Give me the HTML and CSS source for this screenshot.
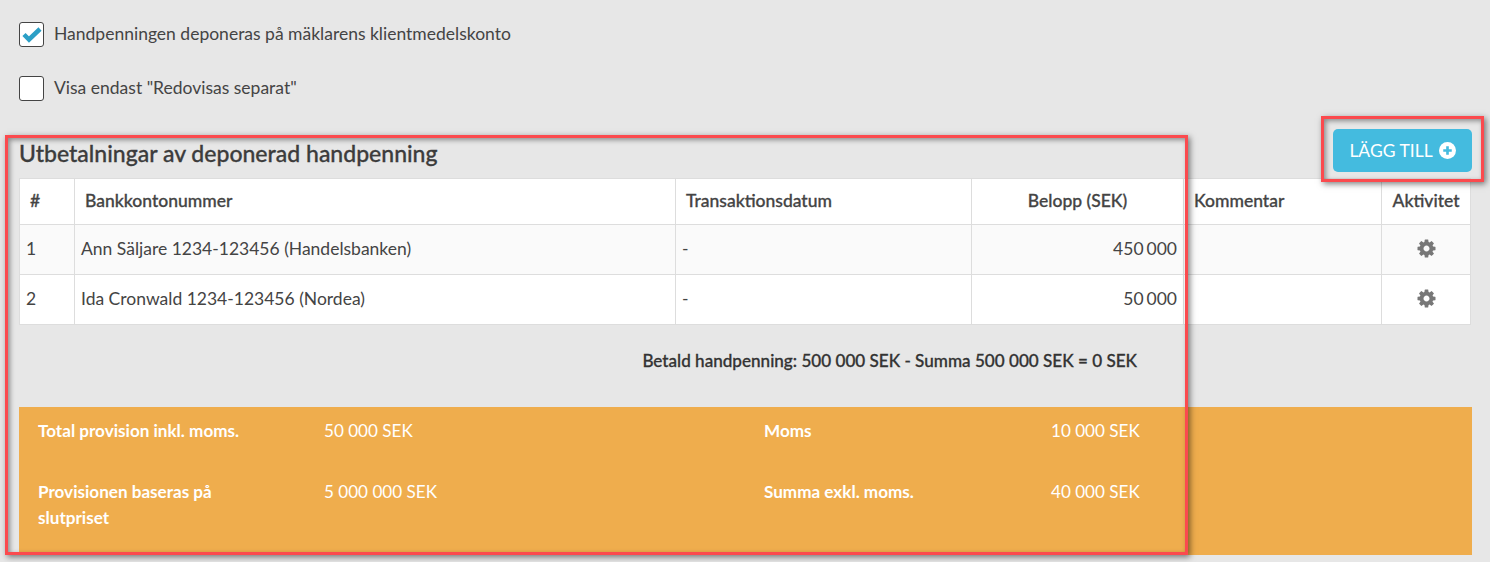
FILE: index.html
```html
<!DOCTYPE html>
<html lang="en">
<head>
    <meta charset="UTF-8">
    <title>Utbetalningar av deponerad handpenning</title>
    <link rel="stylesheet" href="styles.css">
</head>
<body>
    <div class="page">
        <label class="check-row">
            <span class="check-box">
                <svg viewBox="0 0 25 25" width="25" height="25"><path class="check-mark" d="M5 12.500 L10 17.500 L21 7"/></svg>
            </span>
            <span class="check-text">Handpenningen deponeras på mäklarens klientmedelskonto</span>
        </label>
        <label class="check-row">
            <span class="check-box"></span>
            <span class="check-text">Visa endast "Redovisas separat"</span>
        </label>

        <div class="section-head">
            <h2>Utbetalningar av deponerad handpenning</h2>
            <button class="add-btn"><span class="btn-text">LÄGG TILL</span>
                <svg viewBox="0 0 18 18" width="17" height="17"><circle cx="9" cy="9" r="9" fill="#fff"/><path class="plus" d="M9 4.500v9M4.500 9h9"/></svg>
            </button>
        </div>

        <table class="payments">
            <colgroup>
                <col class="col-nr"><col class="col-bank"><col class="col-date"><col class="col-sum"><col class="col-note"><col class="col-act">
            </colgroup>
            <thead>
                <tr>
                    <th>#</th>
                    <th>Bankkontonummer</th>
                    <th>Transaktionsdatum</th>
                    <th class="center">Belopp (SEK)</th>
                    <th>Kommentar</th>
                    <th class="center">Aktivitet</th>
                </tr>
            </thead>
            <tbody>
                <tr>
                    <td>1</td>
                    <td>Ann Säljare 1234-123456 (Handelsbanken)</td>
                    <td>-</td>
                    <td class="right">450 000</td>
                    <td></td>
                    <td class="center"><svg class="gear" viewBox="0 0 1792 1792" width="21" height="21"><path d="M1152 896q0-106-75-181t-181-75-181 75-75 181 75 181 181 75 181-75 75-181zm512-109v222q0 12-8 23t-20 13l-185 28q-19 54-39 91 35 50 107 138 10 12 10 25t-9 23q-27 37-99 108t-94 71q-12 0-26-9l-138-108q-44 23-91 38-16 136-29 186-7 28-36 28h-222q-14 0-24.500-8.500t-11.500-21.500l-28-184q-49-16-90-37l-141 107q-10 9-25 9-14 0-25-11-126-114-165-168-7-10-7-23 0-12 8-23 15-21 51-66.500t54-70.500q-27-50-41-99l-183-27q-13-2-21-12.500t-8-23.500v-222q0-12 8-23t19-13l186-28q14-46 39-92-40-57-107-138-10-12-10-24 0-10 9-23 26-36 98.500-107.500t94.500-71.500q13 0 26 10l138 107q44-23 91-38 16-136 29-186 7-28 36-28h222q14 0 24.500 8.500t11.500 21.500l28 184q49 16 90 37l142-107q9-9 24-9 13 0 25 10 129 119 165 170 7 8 7 22 0 12-8 23-15 21-51 66.500t-54 70.500q26 50 41 98l183 28q13 2 21 12.500t8 23.500z"/></svg></td>
                </tr>
                <tr>
                    <td>2</td>
                    <td>Ida Cronwald 1234-123456 (Nordea)</td>
                    <td>-</td>
                    <td class="right">50 000</td>
                    <td></td>
                    <td class="center"><svg class="gear" viewBox="0 0 1792 1792" width="21" height="21"><path d="M1152 896q0-106-75-181t-181-75-181 75-75 181 75 181 181 75 181-75 75-181zm512-109v222q0 12-8 23t-20 13l-185 28q-19 54-39 91 35 50 107 138 10 12 10 25t-9 23q-27 37-99 108t-94 71q-12 0-26-9l-138-108q-44 23-91 38-16 136-29 186-7 28-36 28h-222q-14 0-24.500-8.500t-11.500-21.500l-28-184q-49-16-90-37l-141 107q-10 9-25 9-14 0-25-11-126-114-165-168-7-10-7-23 0-12 8-23 15-21 51-66.500t54-70.500q-27-50-41-99l-183-27q-13-2-21-12.500t-8-23.500v-222q0-12 8-23t19-13l186-28q14-46 39-92-40-57-107-138-10-12-10-24 0-10 9-23 26-36 98.500-107.500t94.500-71.500q13 0 26 10l138 107q44-23 91-38 16-136 29-186 7-28 36-28h222q14 0 24.500 8.500t11.500 21.500l28 184q49 16 90 37l142-107q9-9 24-9 13 0 25 10 129 119 165 170 7 8 7 22 0 12-8 23-15 21-51 66.500t-54 70.500q26 50 41 98l183 28q13 2 21 12.500t8 23.500z"/></svg></td>
                </tr>
            </tbody>
        </table>

        <p class="balance">Betald handpenning: 500 000 SEK - Summa 500 000 SEK = 0 SEK</p>

        <div class="summary">
            <strong>Total provision inkl. moms.</strong>
            <span>50 000 SEK</span>
            <strong>Moms</strong>
            <span>10 000 SEK</span>
            <strong>Provisionen baseras på slutpriset</strong>
            <span>5 000 000 SEK</span>
            <strong>Summa exkl. moms.</strong>
            <span>40 000 SEK</span>
        </div>
    </div>

    <!-- annotation frames drawn over the screenshot -->
    <div class="mark mark-table"></div>
    <div class="mark mark-btn"></div>
</body>
</html>
```

FILE: styles.css
```css
html, body {
    height: 562px;
    overflow: hidden;
}
body {
    font-family: 'Lato', sans-serif;
    font-size: 17.5px;
    color: #444;
    background-color: #e7e7e7;
    margin: 0;
    position: relative;
}
.page {
    padding: 22px 18px 0 19px;
}
.check-row {
    display: flex;
    align-items: center;
    gap: 10px;
    height: 25px;
    margin-bottom: 29px;
}
.check-text {
    padding-bottom: 3px;
}
.check-box {
    width: 25px;
    height: 25px;
    box-sizing: border-box;
    background-color: #fff;
    border: 1px solid #444;
    border-radius: 3px;
    display: block;
}
.check-box svg {
    display: block;
    margin: -1px;
}
.check-mark {
    fill: none;
    stroke: #2b9fc6;
    stroke-width: 4.500;
}
.section-head {
    display: flex;
    justify-content: space-between;
    align-items: flex-end;
    height: 43px;
    margin-top: -1px;
    margin-bottom: 6px;
}
.section-head h2 {
    font-size: 23px;
    font-weight: 500;
    line-height: 28px;
    color: #3c3c3c;
    -webkit-text-stroke: 0.3px #3c3c3c;
    margin: 0 0 5px;
}
.add-btn {
    font-family: inherit;
    font-size: 17.5px;
    color: #fff;
    background-color: #44bbdf;
    border: none;
    border-radius: 5px;
    height: 43px;
    width: 139px;
    padding: 0;
    display: flex;
    align-items: center;
    justify-content: center;
    gap: 6px;
}
.btn-text {
    padding-bottom: 1px;
}
.plus {
    fill: none;
    stroke: #44bbdf;
    stroke-width: 2.800;
}
.payments {
    width: 1451px;
    table-layout: fixed;
    border-collapse: collapse;
    background-color: #fff;
}
.col-nr { width: 55px; }
.col-bank { width: 601px; }
.col-date { width: 296px; }
.col-sum { width: 212px; }
.col-note { width: 198px; }
.col-act { width: 89px; }
.payments th, .payments td {
    border: 1px solid #ddd;
    text-align: left;
}
.payments th {
    font-weight: 500;
    -webkit-text-stroke: 0.3px #444;
    height: 46px;
    padding: 0 10px 3px;
    box-sizing: border-box;
}
.payments td {
    height: 50px;
    padding: 0 6px 3px;
    box-sizing: border-box;
}
.payments tbody tr:nth-child(odd) {
    background-color: #fafafa;
}
.payments .center {
    text-align: center;
}
.payments .right {
    text-align: right;
    word-spacing: -1.5px;
}
.gear {
    display: block;
    margin: 0 auto;
    fill: #777;
}
.balance {
    font-size: 17.1px;
    font-weight: 500;
    -webkit-text-stroke: 0.3px #333;
    text-align: right;
    line-height: 26px;
    margin: 23px 335px 0 0;
    color: #333;
}
.summary {
    font-size: 17.1px;
    display: grid;
    grid-template-columns: 286px 440px 287px 1fr;
    row-gap: 35px;
    line-height: 26px;
    color: #fff;
    background-color: #efad4d;
    padding: 11px 19px 25px;
    margin-top: 33px;
}
.summary strong {
    line-height: 25.500px;
    padding-right: 50px;
}
.mark {
    position: absolute;
    box-sizing: border-box;
    border: 3px solid #fb4a4e;
    box-shadow: 2px 2px 6px rgba(0, 0, 0, 0.5), inset 2px 2px 5px rgba(0, 0, 0, 0.4);
}
.mark-table {
    left: 5px;
    top: 135px;
    width: 1183px;
    height: 420px;
}
.mark-btn {
    left: 1321px;
    top: 116px;
    width: 163px;
    height: 66px;
}
```
